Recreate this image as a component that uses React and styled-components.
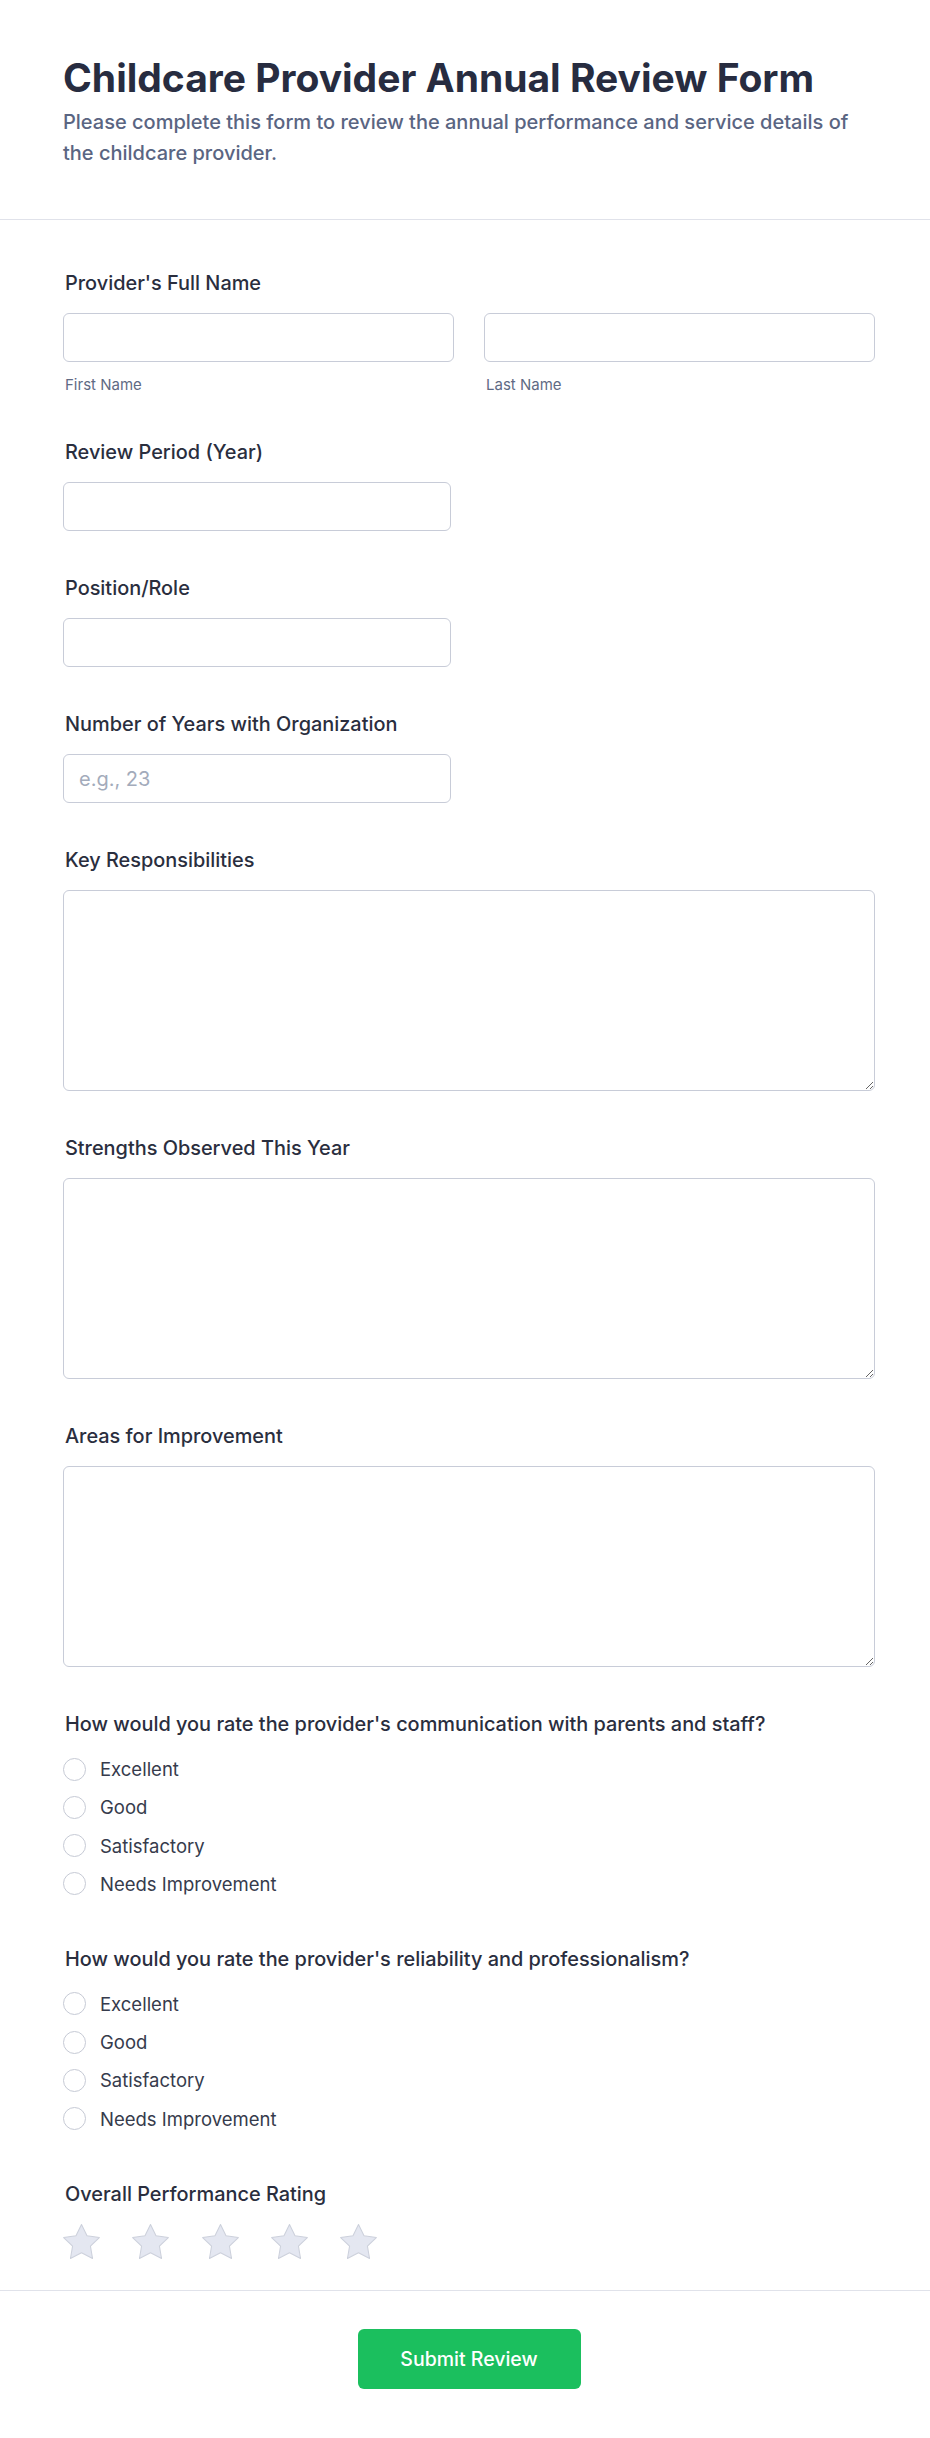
import styled, { createGlobalStyle } from 'styled-components'

const GlobalStyle = createGlobalStyle`
  * { box-sizing: border-box; }
  body {
    margin: 0;
    background: #ffffff;
    font-family: Inter, 'Noto Sans', sans-serif;
    color: #2a2f42;
  }
`

const Page = styled.div`
  width: 930px;
  background: #fff;
`

const Header = styled.header`
  padding: 54px 55px 50px 63px;
  border-bottom: 1px solid #e0e2ea;
`

const Title = styled.h1`
  margin: 0;
  font-size: 39px;
  line-height: 47px;
  font-weight: 700;
  color: #272c40;
`

const Subtitle = styled.p`
  margin: 6px 0 0;
  font-size: 20px;
  line-height: 31px;
  font-weight: 500;
  color: #5a6582;
`

const Form = styled.form`
  display: flex;
  flex-direction: column;
  gap: 45px;
  padding: 51px 55px 31px 63px;
`

const Field = styled.div`
  display: flex;
  flex-direction: column;
`

const Label = styled.label`
  font-size: 19.9px;
  line-height: 25px;
  font-weight: 500;
  color: #2a2e3e;
  margin-bottom: 17px;
  padding-left: 2px;
`

const NameRow = styled.div`
  display: grid;
  grid-template-columns: 1fr 1fr;
  gap: 30px;
`

const SubLabel = styled.span`
  display: block;
  margin-top: 13px;
  font-size: 15px;
  line-height: 20px;
  color: #5f6a84;
  padding-left: 2px;
`

const TextInput = styled.input`
  display: block;
  width: ${(p) => p.$width || '100%'};
  height: 49px;
  padding: 0 15px;
  border: 1.5px solid #c8ccd8;
  border-radius: 6px;
  background: #fff;
  font-family: inherit;
  font-size: 20px;
  color: #2a2e3e;
  outline: none;

  &::placeholder {
    color: #a3abbb;
  }
`

const TextArea = styled.textarea`
  display: block;
  width: 100%;
  height: 201px;
  padding: 12px 15px;
  border: 1.5px solid #c8ccd8;
  border-radius: 6px;
  background: #fff;
  font-family: inherit;
  font-size: 20px;
  resize: vertical;
  outline: none;
`

const RadioList = styled.div`
  display: flex;
  flex-direction: column;
  gap: 8.3px;
  padding-bottom: 3px;
`

const RadioRow = styled.label`
  display: flex;
  align-items: center;
  gap: 14px;
  height: 30px;
  font-size: 18.5px;
  color: #363b4c;
  cursor: pointer;
`

const Radio = styled.input.attrs({ type: 'radio' })`
  appearance: none;
  margin: 0;
  width: 23px;
  height: 23px;
  border-radius: 50%;
  border: 1.5px solid #c6cad5;
  background: #fff;
  flex-shrink: 0;
`

const Stars = styled.div`
  display: flex;
  gap: 32.3px;
`

const Star = styled.svg`
  width: 37px;
  height: 35px;
  display: block;

  path {
    fill: #e4e7f1;
    stroke: #cdd1dc;
    stroke-width: 0.6;
    stroke-linejoin: round;
  }
`

const Footer = styled.footer`
  display: flex;
  justify-content: center;
  padding: 38px 55px 49px 63px;
  border-top: 1px solid #e0e2ea;
`

const SubmitButton = styled.button`
  width: 223px;
  height: 60px;
  border: none;
  border-radius: 6px;
  background: #1bbf5e;
  color: #fff;
  font-family: inherit;
  font-size: 19.5px;
  font-weight: 500;
  cursor: pointer;
`

const options = ['Excellent', 'Good', 'Satisfactory', 'Needs Improvement']

const RadioGroup = ({ name, label }) => (
  <Field>
    <Label>{label}</Label>
    <RadioList>
      {options.map((o) => (
        <RadioRow key={o}>
          <Radio name={name} value={o} />
          {o}
        </RadioRow>
      ))}
    </RadioList>
  </Field>
)

const StarIcon = () => (
  <Star viewBox='1.7 1.7 20.6 19.6'>
    <path d='M12 2l3.09 6.26L22 9.27l-5 4.87 1.18 6.88L12 17.77l-6.18 3.25L7 14.14 2 9.27l6.91-1.01L12 2z' />
  </Star>
)

export default function App() {
  return (
    <Page>
      <GlobalStyle />
      <Header>
        <Title>Childcare Provider Annual Review Form</Title>
        <Subtitle>
          Please complete this form to review the annual performance and service details of
          the childcare provider.
        </Subtitle>
      </Header>
      <Form onSubmit={(e) => e.preventDefault()}>
        <Field>
          <Label>Provider's Full Name</Label>
          <NameRow>
            <div>
              <TextInput type='text' />
              <SubLabel>First Name</SubLabel>
            </div>
            <div>
              <TextInput type='text' />
              <SubLabel>Last Name</SubLabel>
            </div>
          </NameRow>
        </Field>
        <Field>
          <Label>Review Period (Year)</Label>
          <TextInput type='text' $width='388px' />
        </Field>
        <Field>
          <Label>Position/Role</Label>
          <TextInput type='text' $width='388px' />
        </Field>
        <Field>
          <Label>Number of Years with Organization</Label>
          <TextInput type='text' $width='388px' placeholder='e.g., 23' />
        </Field>
        <Field>
          <Label>Key Responsibilities</Label>
          <TextArea />
        </Field>
        <Field>
          <Label>Strengths Observed This Year</Label>
          <TextArea />
        </Field>
        <Field>
          <Label>Areas for Improvement</Label>
          <TextArea />
        </Field>
        <RadioGroup
          name='communication'
          label="How would you rate the provider's communication with parents and staff?"
        />
        <RadioGroup
          name='reliability'
          label="How would you rate the provider's reliability and professionalism?"
        />
        <Field>
          <Label>Overall Performance Rating</Label>
          <Stars>
            {[1, 2, 3, 4, 5].map((n) => (
              <StarIcon key={n} />
            ))}
          </Stars>
        </Field>
      </Form>
      <Footer>
        <SubmitButton type='submit'>Submit Review</SubmitButton>
      </Footer>
    </Page>
  )
}
